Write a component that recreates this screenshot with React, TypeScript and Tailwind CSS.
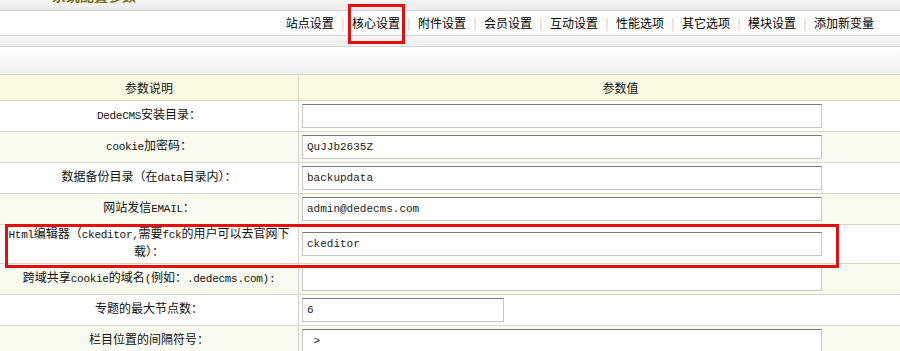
import React from "react"

const tabs = ["站点设置", "核心设置", "附件设置", "会员设置", "互动设置", "性能选项", "其它选项", "模块设置", "添加新变量"]

const rows = [
  { label: ["DedeCMS安装目录："], value: "", short: false },
  { label: ["cookie加密码："], value: "QuJJb2635Z", short: false },
  { label: ["数据备份目录（在data目录内）："], value: "backupdata", short: false },
  { label: ["网站发信EMAIL："], value: "admin@dedecms.com", short: false },
  { label: ["Html编辑器（ckeditor,需要fck的用户可以去官网下", "载）："], value: "ckeditor", short: false, tall: true },
  { label: ["跨域共享cookie的域名(例如：.dedecms.com):"], value: "", short: false },
  { label: ["专题的最大节点数："], value: "6", short: true },
  { label: ["栏目位置的间隔符号："], value: " > ", short: false },
]

// latin runs are drawn a bit smaller, like the old bitmap font does
function Mixed({ text }: { text: string }) {
  const parts = text.split(/([A-Za-z0-9@.,()\-: ]+)/)
  return (
    <>
      {parts.map((p, i) =>
        /^[A-Za-z0-9@.,()\-: ]+$/.test(p) ? (
          <span key={i} className="text-[11px] tracking-[-0.3px]">{p}</span>
        ) : (
          <span key={i}>{p}</span>
        )
      )}
    </>
  )
}

export default function App() {
  return (
    <div className="relative w-[900px] h-[351px] overflow-hidden bg-white text-[12px] text-[#111] font-['Liberation_Mono','Noto_Sans_CJK_SC',monospace]">
      {/* title strip, mostly scrolled off */}
      <div className="h-[11px] overflow-hidden border-b border-[#d2d2d2] bg-gradient-to-b from-[#f4f4f4] to-[#ececec]">
        <div className="ml-[52px] -mt-[12px] leading-[14px] text-[14px] font-bold text-[#77741a] font-['Noto_Sans_CJK_SC',sans-serif]">
          系统配置参数
        </div>
      </div>

      {/* tab bar */}
      <div className="h-[25px] border-b border-[#d4d4d4] bg-white flex items-center justify-end pr-[26px] font-['Noto_Sans_CJK_SC',sans-serif] text-[12px] text-black">
        {tabs.map((t, i) => (
          <React.Fragment key={t}>
            {i > 0 && <span className="w-[18px] text-center text-[#c8c8c8]">|</span>}
            <span className="whitespace-nowrap leading-[16px]">{t}</span>
          </React.Fragment>
        ))}
      </div>

      <div className="h-[11px] border-b border-[#d4d4d4] bg-gradient-to-b from-[#f6f6f6] to-[#efefef]" />
      <div className="h-[28px] border-b border-[#d4d4c8] bg-gradient-to-b from-white to-[#f0f0f0]" />

      {/* table */}
      <div className="w-[942px]">
        <div className="flex h-[26px] border-b border-[#d6d6c6] bg-[#fbfbe2] font-['Noto_Sans_CJK_SC',sans-serif]">
          <div className="w-[299px] border-r border-[#d6d6c6] flex items-center justify-center">参数说明</div>
          <div className="flex-1 flex items-center justify-center">参数值</div>
        </div>
        {rows.map((r, i) => (
          <div
            key={i}
            className={`flex border-b border-[#d6d6c6] ${r.tall ? "h-[39px]" : "h-[31px]"} ${i % 2 ? "bg-[#f9faf0]" : "bg-white"}`}
          >
            <div className="w-[299px] shrink-0 border-r border-[#d6d6c6] flex flex-col items-center justify-center text-center">
              {r.label.map((line) => (
                <div key={line} className="h-[18px] leading-[18px] whitespace-nowrap">
                  <Mixed text={line} />
                </div>
              ))}
            </div>
            <div className="flex-1 flex items-center pl-[3px]">
              <input
                readOnly
                value={r.value}
                className={`h-[24px] ${r.short ? "w-[202px]" : "w-[520px]"} border border-[#c6c6c6] border-t-[#7a7a7a] bg-white px-[4px] text-[11px] text-[#222] outline-none font-['Liberation_Mono',monospace] whitespace-pre`}
              />
            </div>
          </div>
        ))}
      </div>

      {/* red highlight boxes */}
      <div className="absolute left-[348px] top-[4px] w-[57px] h-[40px] border-[3px] border-[#e30e0e]" />
      <div className="absolute left-[5px] top-[224px] w-[834px] h-[44px] border-[3px] border-[#e30e0e]" />
    </div>
  )
}
